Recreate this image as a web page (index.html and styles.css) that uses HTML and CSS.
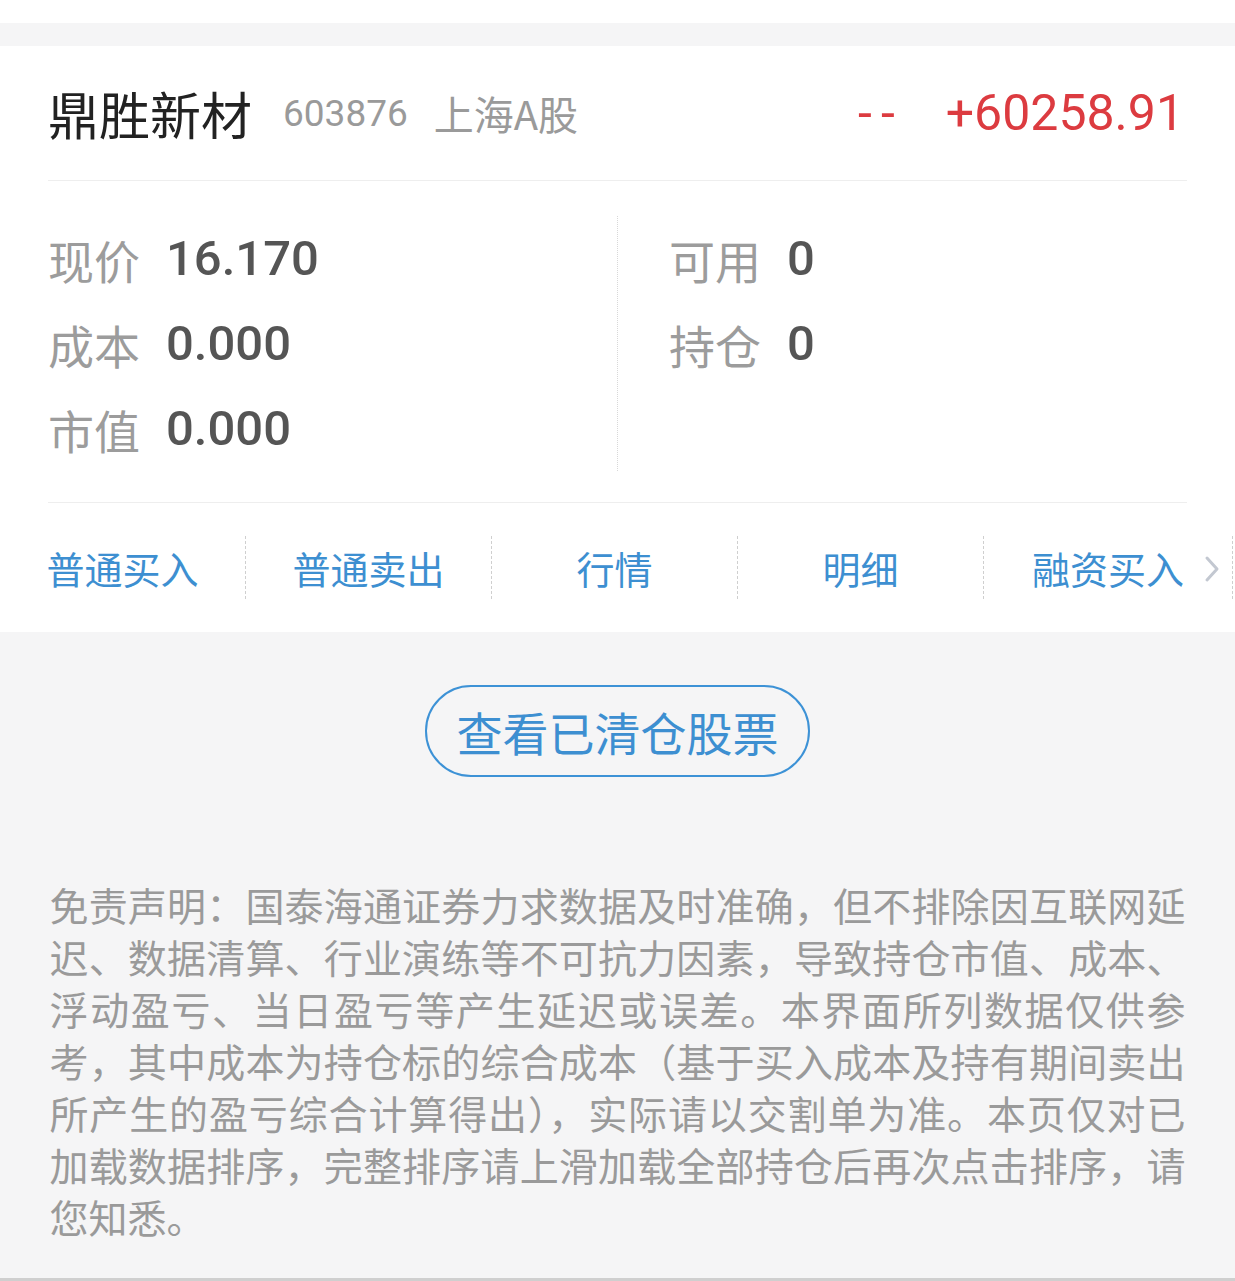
FILE: index.html
```html
<!DOCTYPE html>
<html lang="zh-CN">

<head>
    <meta charset="UTF-8">
    <meta name="viewport" content="width=device-width, initial-scale=1.0">
    <title>持仓详情</title>
    <link rel="stylesheet" href="styles.css">
</head>

<body>
    <div class="top-strip"></div>
    <div class="top-gap"></div>

    <div class="card">
        <div class="card-head">
            <span class="stock-name">鼎胜新材</span>
            <span class="stock-code">603876</span>
            <span class="stock-market">上海A股</span>
            <span class="head-right">
                <span class="num red dash">--</span>
                <span class="num red profit">+60258.91</span>
            </span>
        </div>

        <div class="stats">
            <div class="stats-col">
                <div class="stat-row"><span class="stat-label">现价</span><span class="num stat-value">16.170</span></div>
                <div class="stat-row"><span class="stat-label">成本</span><span class="num stat-value">0.000</span></div>
                <div class="stat-row"><span class="stat-label">市值</span><span class="num stat-value">0.000</span></div>
            </div>
            <div class="stats-col right">
                <div class="stat-row"><span class="stat-label">可用</span><span class="num stat-value">0</span></div>
                <div class="stat-row"><span class="stat-label">持仓</span><span class="num stat-value">0</span></div>
            </div>
        </div>

        <div class="actions">
            <div class="action">普通买入</div>
            <div class="action">普通卖出</div>
            <div class="action">行情</div>
            <div class="action">明细</div>
            <div class="action last">融资买入
                <svg class="chevron" width="16" height="28" viewBox="0 0 16 28">
                    <polyline points="3,3 13,14 3,25" fill="none" stroke="#c3c8d1" stroke-width="3" stroke-linecap="round" stroke-linejoin="round" />
                </svg>
            </div>
        </div>
    </div>

    <div class="bottom-area">
        <button class="cleared-btn">查看已清仓股票</button>

        <p class="disclaimer">
            <span class="line">免责声明：国泰海通证券力求数据及时准确，但不排除因互联网延</span>
            <span class="line">迟、数据清算、行业演练等不可抗力因素，导致持仓市值、成本、</span>
            <span class="line">浮动盈亏、当日盈亏等产生延迟或误差。本界面所列数据仅供参</span>
            <span class="line">考，其中成本为持仓标的综合成本（基于买入成本及持有期间卖出</span>
            <span class="line">所产生的盈亏综合计算得出），实际请以交割单为准。本页仅对已</span>
            <span class="line">加载数据排序，完整排序请上滑加载全部持仓后再次点击排序，请</span>
            <span class="line end">您知悉。</span>
        </p>
    </div>
</body>

</html>
```

FILE: styles.css
```css
body {
    margin: 0;
    height: 100vh;
    display: flex;
    flex-direction: column;
    background-color: #f5f5f6;
    font-family: "Noto Sans CJK SC", "Noto Sans", sans-serif;
}

.top-strip {
    height: 23px;
    background-color: #fff;
}

.top-gap {
    height: 23px;
}

.card {
    background-color: #fff;
}

.num {
    font-family: Roboto, "Noto Sans CJK SC", sans-serif;
}

.card-head {
    margin: 0 48px 0 48px;
    height: 134px;
    display: flex;
    align-items: center;
    border-bottom: 1px solid #eeeeee;
}

.stock-name {
    font-size: 51px;
    color: #222;
}

.stock-code {
    margin-left: 31px;
    font-family: Roboto, sans-serif;
    font-size: 37px;
    color: #9a9a9a;
}

.stock-market {
    margin-left: 26px;
    font-size: 40px;
    color: #9a9a9a;
}

.head-right {
    margin-left: auto;
    display: flex;
    align-items: center;
    margin-right: 3px;
}

.red {
    color: #dc3b40;
}

.dash {
    font-size: 50px;
    letter-spacing: 9px;
    margin-right: 42px;
}

.profit {
    font-size: 50px;
}

.stats {
    margin: 0 48px;
    padding: 35px 0 31px;
    display: flex;
    border-bottom: 1px solid #eeeeee;
}

.stats-col {
    box-sizing: border-box;
    width: 569px;
}

.stats-col.right {
    flex: 1;
    padding-left: 51px;
    border-left: 1px dotted #d8d8d8;
}

.stat-row {
    height: 85px;
    display: flex;
    align-items: center;
}

.stat-label {
    font-size: 46px;
    color: #9c9c9c;
    margin-right: 26px;
}

.stat-value {
    font-size: 49px;
    font-weight: 500;
    color: #555;
}

.actions {
    display: flex;
    padding: 33px 0;
}

.action {
    flex: none;
    width: 245px;
    height: 63px;
    line-height: 63px;
    text-align: center;
    font-size: 38px;
    color: #3d8fd1;
    border-right: 1px dashed #cfcfcf;
}

.action.last {
    position: relative;
    width: 248px;
}

.chevron {
    position: absolute;
    right: 12px;
    top: 19px;
}

.bottom-area {
    flex: 1;
    display: flex;
    flex-direction: column;
    align-items: center;
    border-bottom: 3px solid #cfcfcf;
}

.cleared-btn {
    margin-top: 53px;
    width: 385px;
    height: 92px;
    border: 2px solid #3d92d6;
    border-radius: 46px;
    background-color: transparent;
    font-family: "Noto Sans CJK SC", sans-serif;
    font-size: 46px;
    color: #3d8fd1;
    padding: 0;
    cursor: pointer;
}

.disclaimer {
    margin: 101px 0 0;
    width: 1136px;
    font-size: 39px;
    line-height: 52px;
    color: #9a9a9a;
}

.line {
    display: block;
    text-align: justify;
    text-align-last: justify;
    white-space: nowrap;
}

.line.end {
    text-align-last: left;
}
```
